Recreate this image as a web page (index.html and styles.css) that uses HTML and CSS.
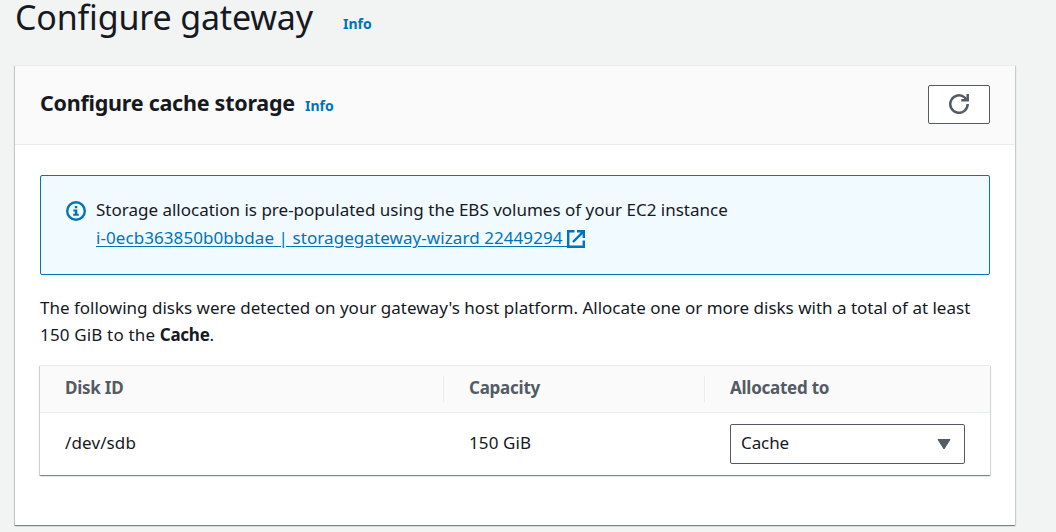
FILE: index.html
```html
<!DOCTYPE html>
<html lang="en">
<head>
<meta charset="utf-8">
<title>Configure gateway</title>
<link rel="stylesheet" href="styles.css">
</head>
<body>
<header class="page-header">
  <h1 class="page-title"><span>Configure gateway</span></h1>
  <a class="info page-info">Info</a>
</header>
<section class="card">
  <div class="card-header">
    <h2 class="card-title"><span>Configure cache storage</span></h2>
    <a class="info card-info">Info</a>
    <button class="refresh" aria-label="Refresh">
      <svg width="20" height="20" viewBox="0 0 20 20" fill="none" stroke="#545b64" stroke-width="2.5"><path d="M18.7 10A8.7 8.7 0 1 1 15.8 3.6L18 6"/><path d="M18.7 0V6.2H12.3"/></svg>
    </button>
  </div>
  <div class="card-body">
    <div class="alert">
      <svg class="alert-icon" width="20" height="20" viewBox="0 0 20 20"><circle cx="10" cy="10" r="8.8" fill="none" stroke="#0073bb" stroke-width="2.4"/><path d="M8.8 5h2.5v2.3H8.8zM7.3 8.5h4v4.2h1.5v2H7.2v-2h1.6v-2.2H7.3z" fill="#0073bb"/></svg>
      <div class="alert-text">
        <div><span class="alert-line">Storage allocation is pre-populated using the EBS volumes of your EC2 instance</span></div>
        <a class="alert-link"><span class="link-text">i-0ecb363850b0bbdae | storagegateway-wizard 22449294 </span><svg width="18" height="18" viewBox="0 0 18 18" fill="none" stroke="#0073bb" stroke-width="2.4"><path d="M7.5 1.2H1.2V16.8H16.8V10.5M10 1.2H16.8V8M16.3 1.7L6 12"/></svg></a>
      </div>
    </div>
    <p class="description"><span>The following disks were detected on your gateway's host platform. Allocate one or more disks with a total of at least</span><br><span class="desc-second">150 GiB to the <b>Cache</b>.</span></p>
    <div class="table">
      <div class="row head">
        <div class="cell">Disk ID</div>
        <div class="cell">Capacity</div>
        <div class="cell">Allocated to</div>
      </div>
      <div class="row data">
        <div class="cell">/dev/sdb</div>
        <div class="cell">150 GiB</div>
        <div class="cell"><div class="select"><span class="select-value">Cache</span><svg width="14" height="11" viewBox="0 0 14 11"><path d="M1 .5H13L7 10z" fill="#545b64" stroke="#545b64" stroke-linejoin="round"/></svg></div></div>
      </div>
    </div>
  </div>
</section>
</body>
</html>
```
FILE: styles.css
```css
* { box-sizing: border-box; }
body {
  margin: 0;
  height: 532px;
  overflow: hidden;
  background: #f2f3f3;
  color: #16191f;
  font: 17px/28px "Noto Sans", sans-serif;
}
h1, h2, p { margin: 0; }
span { white-space: pre; }
.page-header { display: flex; height: 65px; padding-left: 15px; }
.page-title { width: 328px; font-size: 34px; font-weight: 400; line-height: 34px; letter-spacing: -.17px; }
.info { color: #0073bb; font-size: 14px; font-weight: 700; line-height: 20px; }
.page-info { padding-top: 14px; }
.card {
  width: 1000px;
  height: 460px;
  margin-left: 15px;
  background: #fff;
  box-shadow: 0 1px 1px rgba(0, 28, 36, .35), 1px 1px 1px rgba(0, 28, 36, .12), -1px 1px 1px rgba(0, 28, 36, .15);
}
.card-header {
  display: flex;
  align-items: center;
  height: 80px;
  padding: 0 25px 1px;
  background: #fafafa;
  border-top: 1px solid #eaeded;
  border-bottom: 1px solid #eaeded;
}
.card-title { width: 265px; font-size: 21.5px; font-weight: 700; line-height: 30px; letter-spacing: -.25px; padding-bottom: 3px; }
.card-info { padding-top: 2px; }
.refresh {
  display: flex;
  align-items: center;
  justify-content: center;
  width: 62px;
  height: 39px;
  margin-left: auto;
  padding: 0 0 1px;
  background: #fff;
  border: 1px solid #545b64;
  border-radius: 2px;
}
.card-body { padding: 30px 25px 0; }
.alert {
  display: flex;
  height: 100px;
  padding: 20px 25px;
  background: #f1faff;
  border: 1px solid #0073bb;
  border-radius: 2px;
}
.alert-icon { margin: 5px 10px 0 0; }
.alert-link { display: flex; align-items: center; color: #0073bb; }
.alert-link svg { margin-top: 2px; }
.link-text { letter-spacing: .07px; text-decoration: underline; text-underline-offset: 2px; }
.description { padding-top: 19px; line-height: 27px; height: 90px; }
.desc-second { letter-spacing: .16px; }
.description b { font-weight: 700; letter-spacing: -.25px; }
.table { height: 110px; box-shadow: 0 1px 1px rgba(0, 28, 36, .35), 1px 1px 1px rgba(0, 28, 36, .12), -1px 1px 1px rgba(0, 28, 36, .15); }
.row { display: grid; grid-template-columns: 404px 261px 285px; align-items: center; }
.cell { padding: 0 25px; }
.head { height: 48px; background: #fafafa; border-top: 1px solid #eaeded; border-bottom: 1px solid #eaeded; color: #545b64; font-weight: 700; letter-spacing: -.25px; }
.head .cell { height: 26px; line-height: 23px; border-right: 1px solid #eaeded; }
.head .cell:last-child { border-right: 0; }
.data { height: 62px; letter-spacing: .12px; }
.data > .cell:not(:last-child) { padding-bottom: 2px; }
.select {
  display: flex;
  align-items: center;
  justify-content: space-between;
  height: 40px;
  padding: 0 13px 2px 10px;
  border: 1px solid #545b64;
  border-radius: 2px;
  letter-spacing: -.1px;
}
.select svg { margin-top: 2px; }
```
